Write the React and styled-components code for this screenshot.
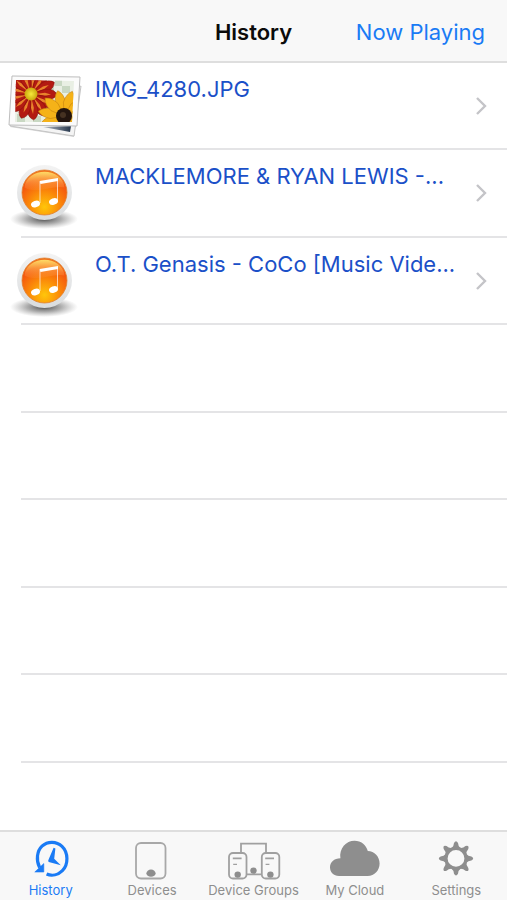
import React, { useState } from 'react';
import styled, { createGlobalStyle } from 'styled-components';

const items = [
	{ id: 1, type: 'photo', title: 'IMG_4280.JPG' },
	{ id: 2, type: 'music', title: 'MACKLEMORE & RYAN LEWIS -...' },
	{ id: 3, type: 'music', title: 'O.T. Genasis - CoCo [Music Vide...' },
];

const emptyRows = [4, 5, 6, 7, 8];

const spread = (count) => Array.from({ length: count }, (_, i) => (360 / count) * i);

const PhotoIcon = () => (
	<Thumb viewBox="0 0 76 68" aria-hidden="true">
		<defs>
			<clipPath id="photo">
				<path d="M9 6L67 7L65 48L8 48Z" />
			</clipPath>
			<linearGradient id="night" x1="0" x2="1">
				<stop offset="0" stopColor="#b9c0c8" />
				<stop offset="1" stopColor="#26364c" />
			</linearGradient>
			<radialGradient id="pollen">
				<stop offset="0" stopColor="#f6ea3c" />
				<stop offset="1" stopColor="#c9a70c" />
			</radialGradient>
		</defs>
		<path d="M8 50L73 12L67 63L3 53Z" fill="#8d8d8d" opacity="0.35" />
		<path d="M10 40L74 12L67 62L3 52Z" fill="#f4f4f4" stroke="#c4c4c4" />
		<path d="M36 53L64 52L63 58Z" fill="url(#night)" />
		<path d="M5 2L73 3L70 52L2 51Z" fill="#fbfbfb" stroke="#bdbdbd" />
		<g clipPath="url(#photo)">
			<rect width="76" height="68" fill="#e9efe4" />
			<path d="M48 6h7v6h-7zM55 12h8v7h-8zM40 12h7v7h-7zM10 40h8v8h-8zM26 42h8v6h-8z" fill="#c9d8c3" />
			{spread(13).map((angle) => (
				<g key={angle} transform={`translate(24 20) rotate(${angle + 8})`}>
					<path d="M0 0L-5 -14Q-6 -23 0 -26Q6 -23 5 -14Z" fill="#b31a12" stroke="#8a120e" strokeWidth="0.6" />
					<path d="M0 -4L-1.4 -14L0 -20L1.4 -14Z" fill="#e8842c" />
				</g>
			))}
			<circle cx="24" cy="20" r="6.5" fill="url(#pollen)" />
			{spread(11).map((angle) => (
				<path
					key={angle}
					d="M0 0L-5 -13Q-5 -22 0 -26Q5 -22 5 -13Z"
					fill="#f5b218"
					stroke="#c98510"
					strokeWidth="0.6"
					transform={`translate(57 42) rotate(${angle - 14})`}
				/>
			))}
			<circle cx="57" cy="42" r="8" fill="#23150f" />
			<circle cx="56" cy="41" r="3" fill="#463222" />
		</g>
	</Thumb>
);

const MusicIcon = ({ id }) => (
	<Thumb viewBox="0 0 76 68" aria-hidden="true">
		<defs>
			<radialGradient id={`shadow${id}`}>
				<stop offset="0" stopColor="#4a4a4a" />
				<stop offset="0.5" stopColor="#777" stopOpacity="0.6" />
				<stop offset="1" stopColor="#999" stopOpacity="0" />
			</radialGradient>
			<linearGradient id={`rim${id}`} x2="0" y2="1">
				<stop offset="0" stopColor="#f3f3f3" />
				<stop offset="1" stopColor="#d9dcde" />
			</linearGradient>
			<radialGradient id={`orb${id}`} cx="0.5" cy="0.82" r="0.75">
				<stop offset="0" stopColor="#ffc60a" />
				<stop offset="0.45" stopColor="#fb8a09" />
				<stop offset="0.85" stopColor="#f4540f" />
				<stop offset="1" stopColor="#f0711c" />
			</radialGradient>
			<linearGradient id={`gloss${id}`} x2="0" y2="1">
				<stop offset="0" stopColor="#ffe06a" stopOpacity="0.95" />
				<stop offset="1" stopColor="#ff9a4a" stopOpacity="0.15" />
			</linearGradient>
		</defs>
		<ellipse cx="37" cy="58" rx="34" ry="10" fill={`url(#shadow${id})`} />
		<circle cx="37.5" cy="31.5" r="27.5" fill={`url(#rim${id})`} />
		<circle cx="37.5" cy="31.5" r="22.5" fill={`url(#orb${id})`} stroke="#e0802e" strokeWidth="0.8" />
		<path d="M17.5 26.5C19.5 5.5 55.5 5.5 57.5 26.5C47.5 23.5 29.5 33.5 17.5 26.5Z" fill={`url(#gloss${id})`} />
		<path d="M32.5 20L51 17V20L33.5 23Z" fill="#fff" />
		<path d="M33 21V42M50.5 18V40" stroke="#fff" strokeWidth="0.8" opacity="0.85" />
		<ellipse cx="28.5" cy="43" rx="4.6" ry="3.2" fill="#fff" transform="rotate(-20 28.5 43)" />
		<ellipse cx="46.5" cy="40.5" rx="4.6" ry="3.2" fill="#fff" transform="rotate(-20 46.5 40.5)" />
	</Thumb>
);

const HistoryIcon = () => (
	<TabIcon viewBox="-2 0 56 40" aria-hidden="true">
		<path
			d="M14.6 27.5C10.8 20 12 11 17 6.2C22.5 1 31.5 1 37 6.4C43.4 12.5 43.6 24.5 37.4 30.6C33.2 34.8 27 36.4 21.6 34"
			fill="none"
			stroke="currentColor"
			strokeWidth="3.2"
		/>
		<path d="M9.8 32L18.8 23.6V32Z" fill="currentColor" stroke="currentColor" strokeWidth="0.6" />
		<path d="M28.6 7.8L30.4 8.4L29.2 18.8L35.8 25.2L23.8 22Q22.6 21 23.6 19.4Z" fill="currentColor" />
	</TabIcon>
);

const DevicesIcon = () => (
	<TabIcon viewBox="-2 0 56 40" aria-hidden="true">
		<rect x="10" y="3" width="29.5" height="35.5" rx="5" fill="none" stroke="#a8a8a8" strokeWidth="1.8" />
		<ellipse cx="25" cy="33.2" rx="4.6" ry="3.6" fill="currentColor" />
	</TabIcon>
);

const GroupsIcon = () => (
	<TabIcon viewBox="-2 0 56 40" aria-hidden="true">
		<g fill="none" stroke="#a0a0a0" strokeWidth="1.8">
			<path d="M14 13V3.6H39V13M19.5 34.4H35" />
			<rect x="2" y="13" width="17.5" height="25.5" rx="4" />
			<rect x="34.8" y="13" width="17.5" height="25.5" rx="4" />
			<path d="M5.8 18.4H14.6M38.2 18.4H47" />
			<path d="M6.2 24.4H10M38.6 24.4H42.4" strokeWidth="1.2" />
		</g>
		<g fill="currentColor">
			<circle cx="10.7" cy="34.6" r="3.2" />
			<circle cx="26.5" cy="30.6" r="3.2" />
			<circle cx="43.4" cy="34.6" r="3.2" />
		</g>
	</TabIcon>
);

const CloudIcon = () => (
	<TabIcon viewBox="-2 0 56 40" aria-hidden="true">
		<path
			d="M10 36C4.6 36 1 32 1 27.2C1 22.5 5 18.4 11.4 18.3C10 8.5 17 0.8 25.6 0.8C32 0.8 37 4.8 38.8 10.9C45.5 11 50.6 16.5 50.6 23.5C50.6 30.4 45.6 36 38.6 36Z"
			fill="currentColor"
		/>
	</TabIcon>
);

const SettingsIcon = () => (
	<TabIcon viewBox="-2 0 56 40" aria-hidden="true">
		<circle cx="26" cy="18.4" r="10" fill="none" stroke="currentColor" strokeWidth="3.2" />
		{spread(8).map((angle) => (
			<path
				key={angle}
				d="M-4.4 -10.4Q-2.2 -12 -2 -15.4Q0 -19 2 -15.4Q2.2 -12 4.4 -10.4Z"
				fill="currentColor"
				transform={`translate(26 18.4) rotate(${angle})`}
			/>
		))}
	</TabIcon>
);

const tabs = [
	{ name: 'History', Icon: HistoryIcon },
	{ name: 'Devices', Icon: DevicesIcon },
	{ name: 'Device Groups', Icon: GroupsIcon },
	{ name: 'My Cloud', Icon: CloudIcon },
	{ name: 'Settings', Icon: SettingsIcon },
];

const App = () => {
	const [active, setActive] = useState('History');

	return (
		<>
			<GlobalStyle />
			<Screen>
				<Header>
					<Title>History</Title>
					<NowPlaying type="button">Now Playing</NowPlaying>
				</Header>
				<List>
					{items.map(({ id, type, title }) => (
						<Row key={id}>
							<Item href={`#item-${id}`}>
								{type === 'photo' ? <PhotoIcon /> : <MusicIcon id={id} />}
								<Name>{title}</Name>
								<Chevron viewBox="0 0 12 20" aria-hidden="true">
									<path d="M2 2L10 10L2 18" fill="none" stroke="#c4c4c8" strokeWidth="2.4" />
								</Chevron>
							</Item>
						</Row>
					))}
					{emptyRows.map((id) => (
						<Row key={id} aria-hidden="true" />
					))}
				</List>
				<TabBar>
					{tabs.map(({ name, Icon }) => (
						<Tab key={name} type="button" $active={name === active} onClick={() => setActive(name)}>
							<Icon />
							{name}
						</Tab>
					))}
				</TabBar>
			</Screen>
		</>
	);
};

const GlobalStyle = createGlobalStyle`
	* {
		box-sizing: border-box;
	}

	body {
		margin: 0;
		background-color: #fff;
		font-family: Inter, Roboto, "Liberation Sans", sans-serif;
	}
`;

const Screen = styled.div`
	display: flex;
	flex-direction: column;
	min-height: 100vh;
`;

const Header = styled.header`
	display: grid;
	grid-template-columns: 1fr auto 1fr;
	align-items: center;
	padding: 17px 22px 14px;
	border-bottom: 2px solid #dedede;
	background-color: #f8f8f8;
`;

const Title = styled.h1`
	grid-column: 2;
	margin: 0;
	color: #0b0b0b;
	font-size: 22px;
	font-weight: 600;
	line-height: 30px;
`;

const NowPlaying = styled.button`
	justify-self: end;
	padding: 0;
	border: none;
	background: none;
	color: #1a7bf5;
	font-family: inherit;
	font-size: 22px;
	line-height: 30px;
	white-space: nowrap;
	cursor: pointer;
`;

const List = styled.ul`
	display: grid;
	flex: 1;
	grid-template-rows: repeat(4, 87px 88px);
	margin: 0;
	padding: 0;
	list-style: none;
`;

const Row = styled.li`
	display: flex;
	flex-direction: column;
	min-width: 0;

	&::after {
		content: '';
		height: 2px;
		margin-top: auto;
		margin-left: 21px;
		background-color: #e4e4e6;
	}
`;

const Item = styled.a`
	display: flex;
	align-items: flex-start;
	padding: 11px 20px 0 7px;
	color: #1b50c8;
	text-decoration: none;
`;

const Thumb = styled.svg`
	flex: none;
	width: 76px;
	height: 68px;
`;

const Name = styled.span`
	flex: 1;
	min-width: 0;
	margin-left: 12px;
	overflow: hidden;
	font-size: 22px;
	line-height: 30px;
	text-overflow: ellipsis;
	white-space: nowrap;
`;

const Chevron = styled.svg`
	flex: none;
	width: 12px;
	height: 20px;
	margin-top: 22px;
	margin-left: 12px;
`;

const TabBar = styled.nav`
	position: sticky;
	bottom: 0;
	display: grid;
	grid-template-columns: repeat(5, 1fr);
	border-top: 2px solid #dedede;
	background-color: #f8f8f8;
`;

const Tab = styled.button`
	display: flex;
	flex-direction: column;
	align-items: center;
	gap: 2px;
	min-width: 0;
	padding: 8px 0 2px;
	border: none;
	background: none;
	color: ${({ $active }) => ($active ? '#1a7bf5' : '#8e8e8e')};
	font-family: inherit;
	font-size: 13px;
	line-height: 16px;
	white-space: nowrap;
	cursor: pointer;
`;

const TabIcon = styled.svg`
	width: 56px;
	height: 40px;
`;

export default App;
